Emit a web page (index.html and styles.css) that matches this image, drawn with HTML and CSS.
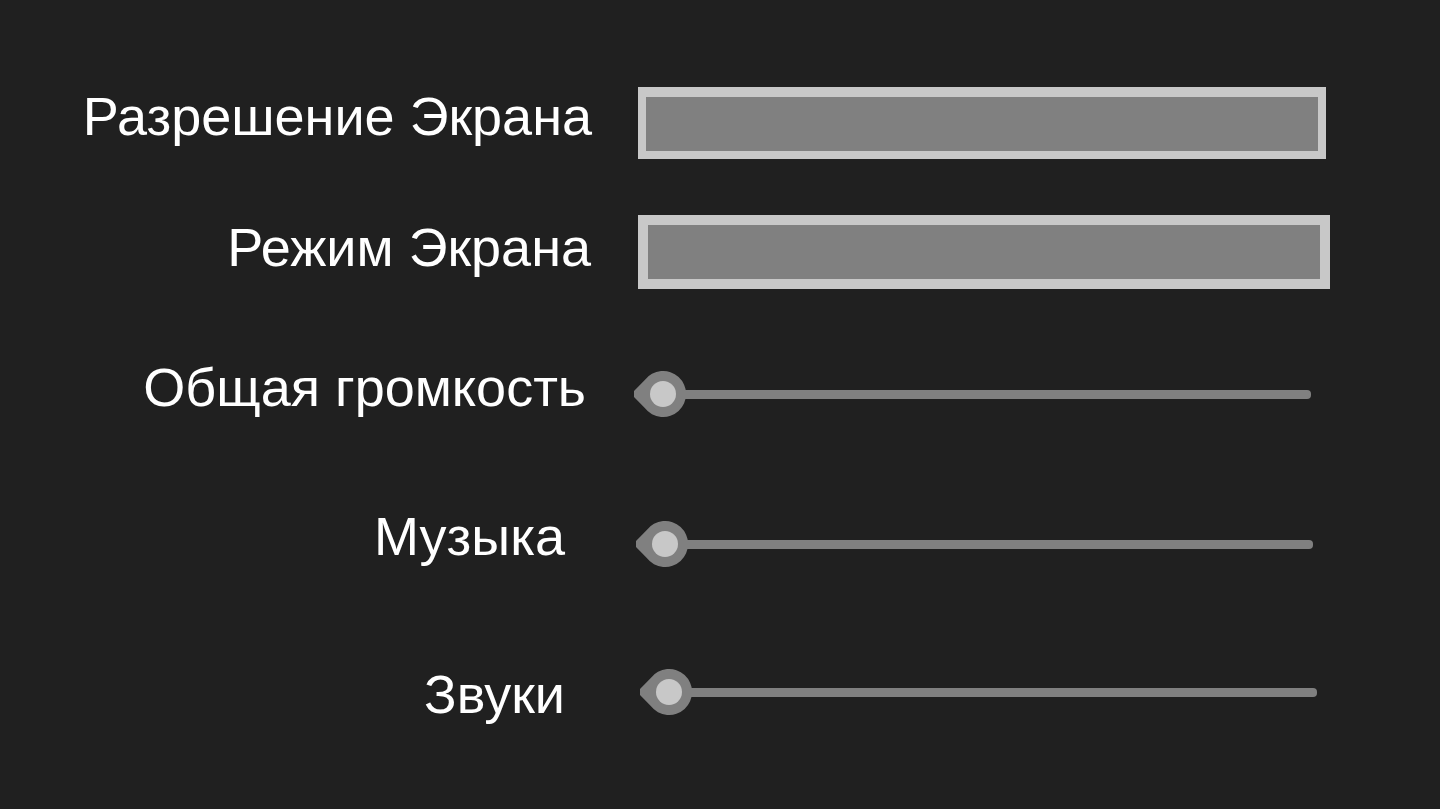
FILE: index.html
```html
<!DOCTYPE html>
<html lang="ru">
<head>
<meta charset="utf-8">
<title>Настройки</title>
<link rel="stylesheet" href="styles.css">
</head>
<body>
<div class="settings">
  <div class="row row-res">
    <div class="label lbl-res">Разрешение Экрана</div>
    <div class="box box-res"></div>
  </div>
  <div class="row row-mode">
    <div class="label lbl-mode">Режим Экрана</div>
    <div class="box box-mode"></div>
  </div>
  <div class="row row-master">
    <div class="label lbl-master">Общая громкость</div>
    <div class="slider sl-master">
      <div class="track"></div>
      <svg class="knob" viewBox="0 0 52 46" width="52" height="46"><path d="M0 20 L0 26 L10.8 37 A23 23 0 1 0 10.8 9 Z" fill="#808080"/><circle cx="29" cy="23" r="13" fill="#c8c8c8"/></svg>
    </div>
  </div>
  <div class="row row-music">
    <div class="label lbl-music">Музыка</div>
    <div class="slider sl-music">
      <div class="track"></div>
      <svg class="knob" viewBox="0 0 52 46" width="52" height="46"><path d="M0 20 L0 26 L10.8 37 A23 23 0 1 0 10.8 9 Z" fill="#808080"/><circle cx="29" cy="23" r="13" fill="#c8c8c8"/></svg>
    </div>
  </div>
  <div class="row row-sfx">
    <div class="label lbl-sfx">Звуки</div>
    <div class="slider sl-sfx">
      <div class="track"></div>
      <svg class="knob" viewBox="0 0 52 46" width="52" height="46"><path d="M0 20 L0 26 L10.8 37 A23 23 0 1 0 10.8 9 Z" fill="#808080"/><circle cx="29" cy="23" r="13" fill="#c8c8c8"/></svg>
    </div>
  </div>
</div>
</body>
</html>
```
FILE: styles.css
```css
html, body {
  margin: 0;
  padding: 0;
  background: #202020;
  height: 100%;
  overflow: hidden;
}
.settings {
  display: flex;
  flex-direction: column;
  padding-top: 87px;
  font-family: "Liberation Sans", Arial, sans-serif;
  color: #ffffff;
}
.row {
  display: grid;
  grid-template-columns: 634px 1fr;
  grid-template-rows: minmax(0, 1fr);
  align-items: center;
  flex: none;
}
.row-res { height: 72px; }
.row-mode { height: 74px; margin-top: 56px; }
.row-master { height: 46px; margin-top: 82px; }
.row-music { height: 46px; margin-top: 104px; }
.row-sfx { height: 46px; margin-top: 102px; }

.label {
  font-size: 54px;
  line-height: 1;
  text-align: right;
  white-space: nowrap;
}
.lbl-res { padding-right: 42px; margin-bottom: 15px; }
.lbl-mode { padding-right: 43px; margin-bottom: 10px; }
.lbl-master { padding-right: 48px; margin-bottom: 14px; }
.lbl-music { padding-right: 69px; margin-bottom: 16px; }
.lbl-sfx { padding-right: 69px; margin-top: 4px; }

.box {
  box-sizing: border-box;
  margin-left: 4px;
  background: #808080;
  border: solid #c8c8c8;
}
.box-res { width: 688px; height: 72px; border-width: 10px 8px 8px 8px; }
.box-mode { width: 692px; height: 74px; border-width: 10px; }

.slider {
  position: relative;
  width: 677px;
  height: 46px;
  display: flex;
  align-items: center;
}
.sl-master { margin-left: 0; }
.sl-music { margin-left: 2px; }
.sl-sfx { margin-left: 6px; }
.track {
  margin-left: 29px;
  flex: 1;
  height: 9px;
  background: #808080;
  border-radius: 0 4px 4px 0;
}
.knob {
  position: absolute;
  left: 0;
  top: 0;
  display: block;
}
```
